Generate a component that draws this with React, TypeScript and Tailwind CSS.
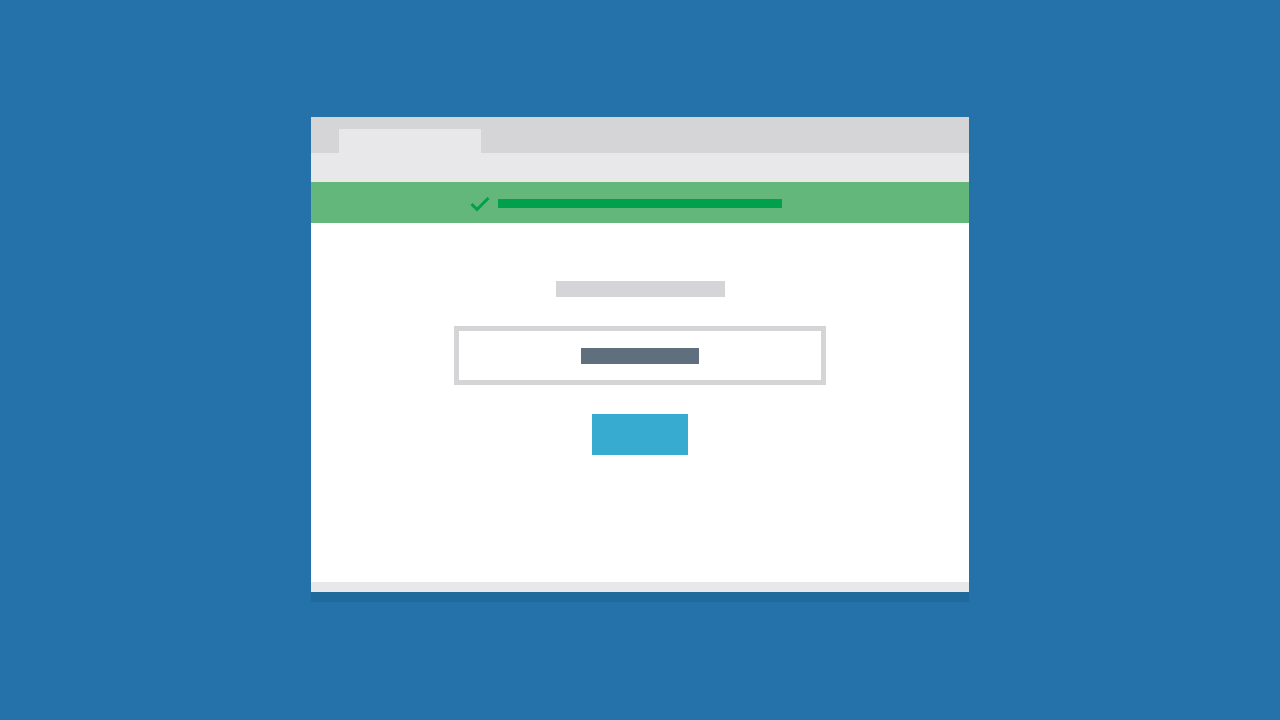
export default function App() {
  return (
    <div className="flex h-[720px] w-[1280px] justify-center bg-[#2472a9] pt-[117px]">
      <div className="flex h-[475px] w-[658px] flex-col shadow-[0_10px_0_#20699c]">
        {/* tab strip */}
        <div className="h-[36px] bg-[#d5d5d8] pl-[28px] pt-[12px]">
          <div className="h-[24px] w-[142px] bg-[#e8e8ea]" />
        </div>
        <div className="h-[29px] bg-[#e8e8ea]" />

        {/* success banner */}
        <div className="flex h-[41px] items-start bg-[#63b77a] pl-[159px]">
          <svg width="20" height="15" viewBox="0 0 20 15" className="mr-[8px] mt-[15px]">
            <path d="M1.5 7 L7 12.5 L18.5 1" fill="none" stroke="#00a04c" strokeWidth="3" />
          </svg>
          <div className="mt-[17px] h-[9px] w-[284px] bg-[#00a04c]" />
        </div>

        {/* form */}
        <div className="flex flex-1 flex-col items-center bg-white pt-[58px]">
          <div className="h-[16px] w-[169px] bg-[#d5d5d8]" />
          <div className="mt-[29px] flex h-[59px] w-[372px] items-center justify-center border-[5px] border-[#d5d5d8]">
            <div className="h-[16px] w-[118px] bg-[#5f6f7d]" />
          </div>
          <div className="mt-[29px] h-[41px] w-[96px] bg-[#37acd0]" />
        </div>
        <div className="h-[10px] bg-[#e8e8ea]" />
      </div>
    </div>
  )
}
